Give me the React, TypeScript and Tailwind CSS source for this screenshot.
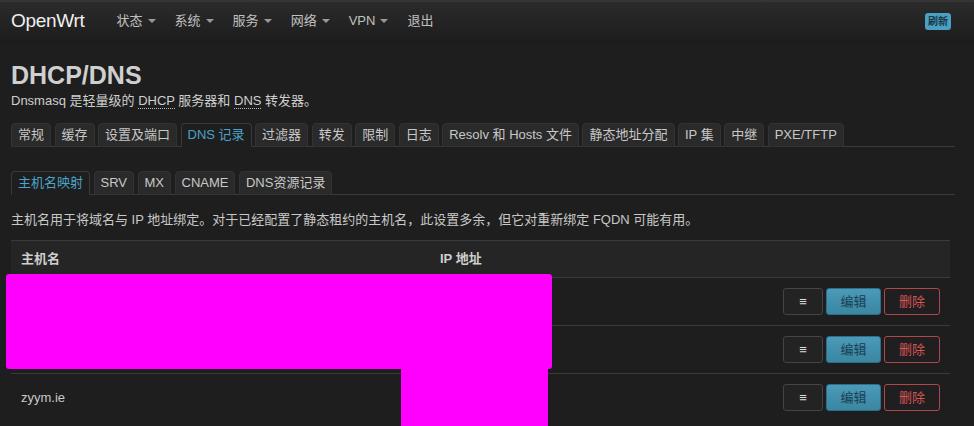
import React from "react";

const menu = ["状态", "系统", "服务", "网络", "VPN"];
const tabs = ["常规", "缓存", "设置及端口", "DNS 记录", "过滤器", "转发", "限制", "日志", "Resolv 和 Hosts 文件", "静态地址分配", "IP 集", "中继", "PXE/TFTP"];
const subTabs = ["主机名映射", "SRV", "MX", "CNAME", "DNS资源记录"];
const rows = ["", "", "zyym.ie"];

const font = { fontFamily: '"Liberation Sans", "Noto Sans CJK SC", sans-serif' };

function Caret() {
  return <span className="ml-[5px] inline-block border-x-[4px] border-t-[4px] border-x-transparent border-t-[#999] align-middle" />;
}

function TabBar({ items, active }: { items: string[]; active: number }) {
  return (
    <div className="mr-[8px] flex gap-[3.5px] border-b border-[#3a3a3a]">
      {items.map((t, i) => (
        <div
          key={t}
          className={`-mb-px rounded-t-[4px] border px-[6px] pb-[3px] pt-[3px] text-[13px] leading-[16px] ${
            i === active ? "border-[#3a3a3a] border-b-[#1e1e1e] bg-[#1e1e1e] text-[#4aa3c8]" : "border-[#333] bg-[#2a2a2a] text-[#c8c8c8]"
          }`}
        >
          {t}
        </div>
      ))}
    </div>
  );
}

export default function App() {
  return (
    <div className="relative h-[426px] w-[974px] overflow-hidden bg-[#1e1e1e] text-[#c8c8c8]" style={font}>
      {/* Top bar */}
      <div className="flex h-[44px] items-center border-t-2 border-[#353535] bg-gradient-to-b from-[#2b2b2b] to-[#1c1c1c] pb-[4px] pl-[11px] pr-[23px]">
        <div className="mr-[32px] text-[19px] font-light tracking-[-0.3px] text-[#f0f0f0]">OpenWrt</div>
        <div className="flex gap-[19px] text-[13px] text-[#c0c0c0]">
          {menu.map((m) => (
            <span key={m} className="flex items-center">
              {m}
              <Caret />
            </span>
          ))}
          <span>退出</span>
        </div>
        <div className="ml-auto rounded-[3px] bg-[#4aa0c0] px-[3px] py-[1px] text-[10px] font-bold text-[#153847]">刷新</div>
      </div>

      <div className="px-[11px]">
        <h1 className="mt-[16px] text-[25px] font-bold leading-[30px] text-[#cfcfcf]">DHCP/DNS</h1>
        <p className="mt-[3px] text-[13px] leading-[16px] text-[#cfcfcf]">
          Dnsmasq 是轻量级的 <span className="border-b border-dotted border-[#bbb]">DHCP</span> 服务器和{" "}
          <span className="border-b border-dotted border-[#bbb]">DNS</span> 转发器。
        </p>

        <div className="mt-[14px]">
          <TabBar items={tabs} active={3} />
        </div>
        <div className="mt-[24px]">
          <TabBar items={subTabs} active={0} />
        </div>

        <p className="mt-[17px] text-[13px] leading-[16px]">
          主机名用于将域名与 IP 地址绑定。对于已经配置了静态租约的主机名，此设置多余，但它对重新绑定 FQDN 可能有用。
        </p>

        <div className="mr-[13px] mt-[12px] border-t border-[#3a3a3a]">
          <div className="grid h-[36px] grid-cols-[419px_1fr] items-center bg-[#252525] px-[10px] text-[13px] font-bold text-[#cfcfcf]">
            <span>主机名</span>
            <span>IP 地址</span>
          </div>
          {rows.map((r, i) => (
            <div key={i} className="grid h-[48px] grid-cols-[419px_1fr_auto] items-center border-t border-[#3a3a3a] px-[10px] text-[13px]">
              <span>{r}</span>
              <span />
              <div className="flex gap-[3px]">
                <button className="h-[27px] w-[40px] rounded-[3px] border border-[#444] bg-[#232323] text-[13px] text-[#ddd]">≡</button>
                <button className="h-[27px] w-[55px] rounded-[3px] border border-[#2d6f8a] bg-gradient-to-b from-[#4b9ab8] to-[#3a86a3] text-[13px] text-[#1b3f4f]">编辑</button>
                <button className="h-[27px] w-[56px] rounded-[3px] border border-[#b0474a] bg-[#1f1f1f] text-[13px] text-[#d65356]">删除</button>
              </div>
            </div>
          ))}
        </div>
      </div>

      {/* redaction overlays */}
      <div className="absolute left-[6px] top-[274px] h-[95px] w-[546px] rounded-[3px] bg-[#ff00ff]" />
      <div className="absolute left-[401px] top-[369px] h-[57px] w-[147px] bg-[#ff00ff]" />
    </div>
  );
}
